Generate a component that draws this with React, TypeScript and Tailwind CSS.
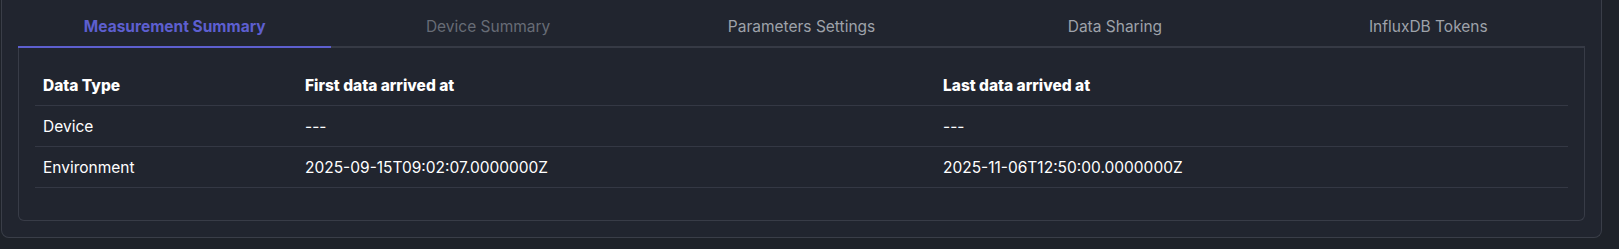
import { useState } from 'react'

const tabs = [
  { label: 'Measurement Summary' },
  { label: 'Device Summary', muted: true },
  { label: 'Parameters Settings' },
  { label: 'Data Sharing' },
  { label: 'InfluxDB Tokens' },
]

const rows = [
  { type: 'Device', first: '---', last: '---' },
  { type: 'Environment', first: '2025-09-15T09:02:07.0000000Z', last: '2025-11-06T12:50:00.0000000Z' },
]

export default function App() {
  const [active, setActive] = useState(0)

  return (
    <div className="h-[249px] w-full overflow-hidden bg-[#1e2229] pl-[1px] pr-[17px] font-['Inter',sans-serif] text-[15.5px]">
      <div className="rounded-b-lg border-x border-b border-[#3a3e48] bg-[#21252f] px-4 pb-4">
        {/* tabs */}
        <div className="flex border-b-2 border-[#363a45]">
          {tabs.map((t, i) => (
            <button
              key={t.label}
              onClick={() => setActive(i)}
              className={`-mb-[2px] flex-1 border-b-2 pt-[15px] pb-[7px] text-center leading-6 ${
                active === i
                  ? 'border-[#5d5fcf] font-bold text-[#5d5fcf]'
                  : t.muted
                    ? 'border-transparent text-[#676c76]'
                    : 'border-transparent text-[#9ea2aa]'
              }`}
            >
              {t.label}
            </button>
          ))}
        </div>

        {/* panel */}
        <div className="rounded-b-md border-x border-b border-[#383c47] px-4 pt-4 pb-8">
          <table className="w-full table-fixed border-collapse text-left text-white">
            <thead>
              <tr className="h-[41px] border-b border-[#343844]">
                <th className="w-[262px] px-2 pt-[3px] font-extrabold">Data Type</th>
                <th className="w-[638px] px-2 pt-[3px] font-extrabold">First data arrived at</th>
                <th className="px-2 pt-[3px] font-extrabold">Last data arrived at</th>
              </tr>
            </thead>
            <tbody>
              {rows.map(r => (
                <tr key={r.type} className="h-[41px] border-b border-[#343844]">
                  <td className="px-2 pt-[2px]">{r.type}</td>
                  <td className="px-2 pt-[2px]">{r.first}</td>
                  <td className="px-2 pt-[2px]">{r.last}</td>
                </tr>
              ))}
            </tbody>
          </table>
        </div>
      </div>
    </div>
  )
}
